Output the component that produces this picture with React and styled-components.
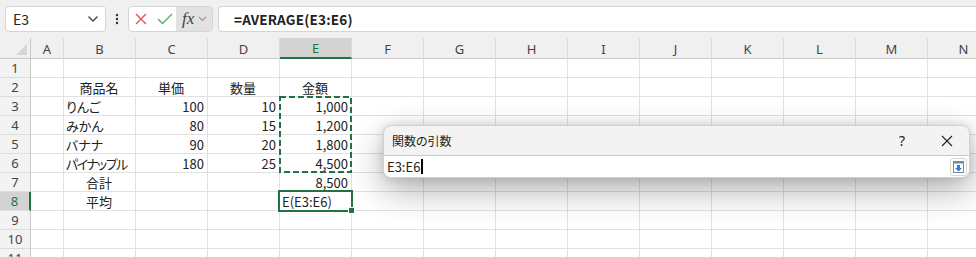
import React from "react";
import styled, { createGlobalStyle } from "styled-components";

const Global = createGlobalStyle`
  html, body { margin: 0; padding: 0; background: #fff; }
  body { font-family: "Noto Sans CJK JP", "Noto Sans", sans-serif; }
  * { box-sizing: border-box; }
`;

const Page = styled.div`
  position: relative;
  width: 976px;
  height: 257px;
  overflow: hidden;
  background: #fff;
`;

const Toolbar = styled.div`
  height: 38px;
  background: #f0f0f0;
  display: flex;
  align-items: flex-start;
  padding: 6px 0 0 5px;
  gap: 0;
`;

const NameBox = styled.div`
  width: 101px;
  height: 26px;
  background: #fff;
  border: 1px solid #d4d4d4;
  border-radius: 4px;
  display: flex;
  align-items: center;
  justify-content: space-between;
  padding: 0 6px 0 7px;
  font-size: 14px;
  color: #222;
`;

const Dots = styled.div`
  width: 22px;
  height: 26px;
  display: flex;
  align-items: center;
  justify-content: center;
  color: #333;
`;

const FuncBox = styled.div`
  width: 85px;
  height: 26px;
  background: #fff;
  border: 1px solid #d4d4d4;
  border-radius: 4px;
  display: flex;
  align-items: stretch;
  overflow: hidden;
`;

const FuncIcon = styled.div`
  width: ${(p) => p.$w}px;
  display: flex;
  align-items: center;
  justify-content: center;
`;

const FxArea = styled.div`
  flex: 1;
  background: #e2e2e2;
  display: flex;
  align-items: center;
  gap: 4px;
  padding-left: 6px;
  font-family: "Liberation Serif", "DejaVu Serif", serif;
  font-style: italic;
  font-size: 17px;
  color: #444;
`;

const FormulaBar = styled.div`
  margin-left: 5px;
  flex: 1;
  height: 26px;
  background: #fff;
  border: 1px solid #d4d4d4;
  border-right: none;
  border-radius: 4px 0 0 4px;
  display: flex;
  align-items: center;
  padding-left: 15px;
  font-size: 13.5px;
  font-weight: 700;
  color: #222;
  letter-spacing: 0.2px;
`;

const Grid = styled.div`
  display: grid;
  grid-template-columns: 31px 33px repeat(13, 72px);
  grid-auto-rows: 19px;
  grid-template-rows: 21px;
  font-size: 13px;
  color: #222;
`;

const Corner = styled.div`
  background: #f0f0f0;
  border-right: 1px solid #c8c8c8;
  border-bottom: 1px solid #c8c8c8;
  position: relative;
  &::after {
    content: "";
    position: absolute;
    right: 3px;
    bottom: 3px;
    border-left: 11px solid transparent;
    border-bottom: 11px solid #d6d6d6;
  }
`;

const ColHead = styled.div`
  background: ${(p) => (p.$active ? "#d3d3d3" : "#f0f0f0")};
  border-right: 1px solid #dcdcdc;
  border-bottom: ${(p) => (p.$active ? "2px solid #217346" : "1px solid #c8c8c8")};
  display: flex;
  align-items: center;
  justify-content: center;
  color: ${(p) => (p.$active ? "#217346" : "#444")};
  font-family: "Noto Sans", sans-serif;
  font-size: 13px;
  padding-top: 1px;
`;

const RowHead = styled.div`
  background: ${(p) => (p.$active ? "#d3d3d3" : "#f3f3f3")};
  border-right: ${(p) => (p.$active ? "2px solid #217346" : "1px solid #c8c8c8")};
  border-bottom: 1px solid #dcdcdc;
  display: flex;
  align-items: center;
  justify-content: center;
  color: ${(p) => (p.$active ? "#217346" : "#444")};
  font-family: "Noto Sans", sans-serif;
  font-size: 13px;
`;

const Cell = styled.div`
  border-right: 1px solid #e1e1e1;
  border-bottom: 1px solid #e1e1e1;
  display: flex;
  align-items: center;
  justify-content: ${(p) =>
    p.$align === "right" ? "flex-end" : p.$align === "center" ? "center" : "flex-start"};
  padding: 0 3px 0 2px;
  white-space: nowrap;
  overflow: visible;
  line-height: 1;
  font-feature-settings: "palt";
  letter-spacing: ${(p) => (p.$tight ? "-1.6px" : "0")};
`;

const Ants = styled.svg`
  position: absolute;
  left: 278px;
  top: 95px;
`;

const Selection = styled.div`
  position: absolute;
  left: 278px;
  top: 190px;
  width: 75px;
  height: 22px;
  border: 2px solid #217346;
  &::after {
    content: "";
    position: absolute;
    right: -4px;
    bottom: -4px;
    width: 5px;
    height: 5px;
    background: #217346;
    border: 1px solid #fff;
  }
`;

const Dialog = styled.div`
  position: absolute;
  left: 383px;
  top: 125px;
  width: 587px;
  height: 53px;
  border-radius: 8px;
  background: #f3f3f3;
  border: 1px solid #d0d0d0;
  box-shadow: 0 12px 34px rgba(0, 0, 0, 0.32), 0 0 10px rgba(0, 0, 0, 0.12);
  overflow: hidden;
  display: flex;
  flex-direction: column;
`;

const DialogTitle = styled.div`
  height: 30px;
  display: flex;
  align-items: center;
  padding-left: 8px;
  font-size: 12px;
  color: #222;
  border-bottom: 1px solid #c9c9c9;
  font-feature-settings: "palt";
`;

const TitleText = styled.div`
  flex: 1;
`;

const TitleBtn = styled.div`
  width: ${(p) => p.$w}px;
  display: flex;
  justify-content: center;
  align-items: center;
  font-family: "Noto Sans", sans-serif;
  font-size: 14px;
  color: #222;
`;

const DialogInput = styled.div`
  flex: 1;
  background: #fff;
  display: flex;
  align-items: center;
  padding: 0 2px 0 3px;
  font-size: 13px;
  color: #222;
`;

const Caret = styled.span`
  display: inline-block;
  width: 2px;
  height: 15px;
  background: #000;
  margin-left: 1px;
`;

const InputText = styled.div`
  flex: 1;
  display: flex;
  align-items: center;
`;

const CollapseBtn = styled.div`
  width: 17px;
  height: 18px;
  border: 1px solid #d6d6d6;
  border-radius: 3px;
  background: #fff;
  display: flex;
  align-items: center;
  justify-content: center;
`;

const cols = ["A", "B", "C", "D", "E", "F", "G", "H", "I", "J", "K", "L", "M", "N"];

const data = {
  2: { B: ["商品名", "center"], C: ["単価", "center"], D: ["数量", "center"], E: ["金額", "center"] },
  3: { B: ["りんご"], C: ["100", "right"], D: ["10", "right"], E: ["1,000", "right"] },
  4: { B: ["みかん"], C: ["80", "right"], D: ["15", "right"], E: ["1,200", "right"] },
  5: { B: ["バナナ"], C: ["90", "right"], D: ["20", "right"], E: ["1,800", "right"] },
  6: { B: ["パイナップル", "left", true], C: ["180", "right"], D: ["25", "right"], E: ["4,500", "right"] },
  7: { B: ["合計", "center"], E: ["8,500", "right"] },
  8: { B: ["平均", "center"], E: ["E(E3:E6)", "left"] },
};

export default function App() {
  const rows = Array.from({ length: 11 }, (_, i) => i + 1);
  return (
    <Page>
      <Global />
      <Toolbar>
        <NameBox>
          <span>E3</span>
          <svg width="12" height="8" viewBox="0 0 12 8">
            <path d="M1.5 1.5 L6 6 L10.5 1.5" fill="none" stroke="#444" strokeWidth="1.3" />
          </svg>
        </NameBox>
        <Dots>
          <svg width="4" height="12" viewBox="0 0 4 12">
            <circle cx="2" cy="2" r="1.2" fill="#333" />
            <circle cx="2" cy="6" r="1.2" fill="#333" />
            <circle cx="2" cy="10" r="1.2" fill="#333" />
          </svg>
        </Dots>
        <FuncBox>
          <FuncIcon $w={24}>
            <svg width="12" height="12" viewBox="0 0 12 12">
              <path d="M1 1 L11 11 M11 1 L1 11" stroke="#e35252" strokeWidth="1.4" />
            </svg>
          </FuncIcon>
          <FuncIcon $w={23}>
            <svg width="16" height="12" viewBox="0 0 16 12">
              <path d="M1 6 L5.5 10.5 L15 1" fill="none" stroke="#4caf6a" strokeWidth="1.4" />
            </svg>
          </FuncIcon>
          <FxArea>
            <span>fx</span>
            <svg width="9" height="6" viewBox="0 0 9 6">
              <path d="M1 1 L4.5 4.5 L8 1" fill="none" stroke="#999" strokeWidth="1.1" />
            </svg>
          </FxArea>
        </FuncBox>
        <FormulaBar>=AVERAGE(E3:E6)</FormulaBar>
      </Toolbar>
      <Grid>
        <Corner />
        {cols.map((c) => (
          <ColHead key={c} $active={c === "E"}>
            {c}
          </ColHead>
        ))}
        {rows.map((r) => (
          <React.Fragment key={r}>
            <RowHead $active={r === 8}>{r}</RowHead>
            {cols.map((c) => {
              const d = data[r] && data[r][c];
              return (
                <Cell key={c} $align={d ? d[1] : "left"} $tight={d ? d[2] : false}>
                  {d ? d[0] : ""}
                </Cell>
              );
            })}
          </React.Fragment>
        ))}
      </Grid>
      <Ants width="75" height="79" viewBox="0 0 75 79">
        <rect x="2" y="2" width="71" height="75" fill="none" stroke="#217346" strokeWidth="2" strokeDasharray="6 3" />
      </Ants>
      <Selection />
      <Dialog>
        <DialogTitle>
          <TitleText>関数の引数</TitleText>
          <TitleBtn $w={46}>?</TitleBtn>
          <TitleBtn $w={44}>
            <svg width="12" height="12" viewBox="0 0 12 12">
              <path d="M1 1 L11 11 M11 1 L1 11" stroke="#222" strokeWidth="1.1" />
            </svg>
          </TitleBtn>
        </DialogTitle>
        <DialogInput>
          <InputText>
            E3:E6<Caret />
          </InputText>
          <CollapseBtn>
            <svg width="11" height="12" viewBox="0 0 11 12">
              <rect x="0.5" y="0.5" width="10" height="11" fill="#fff" stroke="#7a8a9a" />
              <rect x="0.5" y="0.5" width="10" height="2" fill="#7a8a9a" />
              <path d="M4 4 H7 V7 H9 L5.5 10.5 L2 7 H4 Z" fill="#2f7fd6" />
            </svg>
          </CollapseBtn>
        </DialogInput>
      </Dialog>
    </Page>
  );
}
